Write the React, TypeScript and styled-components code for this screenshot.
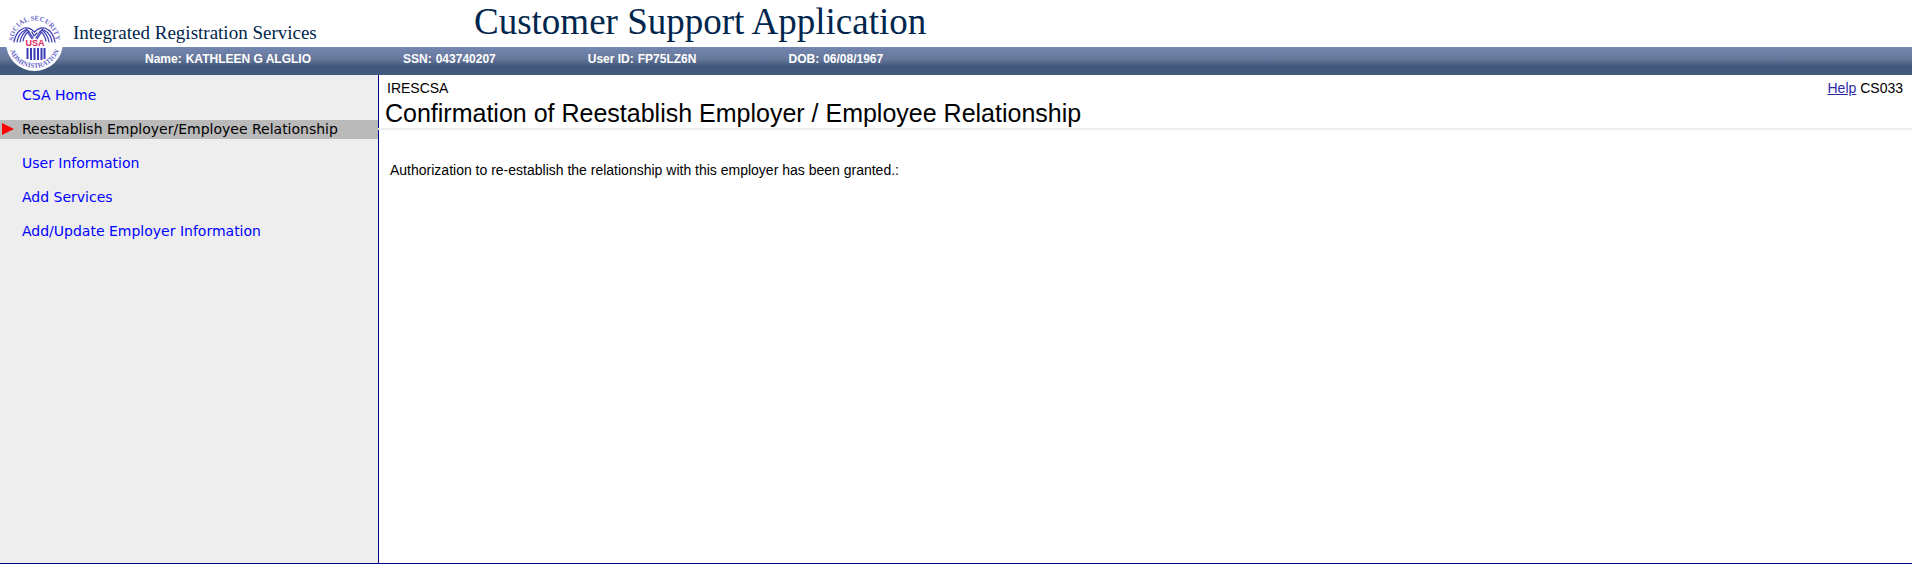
import React from "react";
import styled, { createGlobalStyle } from "styled-components";

const Global = createGlobalStyle`
  *, *::before, *::after { box-sizing: border-box; }
  body {
    margin: 0;
    background: #fff;
    color: #000;
    font-family: "Liberation Sans", Arial, sans-serif;
    font-size: 14px;
    line-height: 16px;
  }
  h1, h2, p, ul, dl, dt, dd { margin: 0; padding: 0; font-weight: inherit; }
  ul { list-style: none; }
`;

const Page = styled.div`
  display: flex;
  flex-direction: column;
  min-height: 100vh;
  padding-bottom: 23px;
`;

const Header = styled.header`
  position: relative;
`;

const Titles = styled.div`
  display: flex;
  align-items: flex-start;
  height: 47px;
  padding-left: 73px;
  color: #00264d;
  font-family: Georgia, "Liberation Serif", serif;
  white-space: nowrap;
`;

const ServiceName = styled.p`
  width: 401px;
  padding-top: 22px;
  font-size: 19px;
  line-height: 22px;
`;

const AppName = styled.p`
  padding-top: 2px;
  font-size: 37px;
  line-height: 40px;
`;

const Seal = styled.svg`
  position: absolute;
  left: 6px;
  top: 14px;
  width: 57px;
  height: 57px;
`;

const UserBar = styled.dl`
  display: flex;
  gap: 92px;
  height: 28px;
  padding: 4px 0 0 145px;
  background: linear-gradient(#7386b0 0%, #68799c 40%, #40597d 70%, #40597d 100%);
  color: #fff;
  font-size: 12px;
  font-weight: bold;
  white-space: nowrap;
`;

const UserFact = styled.div`
  display: flex;
  gap: 4px;
`;

const Columns = styled.div`
  display: flex;
  flex: 1;
  border-bottom: 1px solid #00008b;
`;

const Sidebar = styled.nav`
  flex: none;
  width: 378px;
  padding-top: 11px;
  background: #eee;
  font-family: Verdana, "DejaVu Sans", sans-serif;
  line-height: 19px;
`;

const NavList = styled.ul`
  display: flex;
  flex-direction: column;
  gap: 15px;
`;

const NavItem = styled.li<{ $current?: boolean }>`
  position: relative;
  padding-left: 22px;
  background: ${(p) => (p.$current ? "#bababa" : "transparent")};
`;

const NavLink = styled.a<{ $current?: boolean }>`
  color: ${(p) => (p.$current ? "#000" : "#00f")};
  text-decoration: none;
`;

const Marker = styled.svg`
  position: absolute;
  left: 2px;
  top: 3px;
  width: 12px;
  height: 12px;
`;

const Main = styled.main`
  display: flex;
  flex: 1;
  flex-direction: column;
  min-width: 0;
`;

const Heading = styled.header`
  padding: 5px 9px 1px 6px;
  border-left: 1px solid #00008b;
`;

const Meta = styled.div`
  display: flex;
  justify-content: space-between;
  padding-left: 2px;
`;

const Title = styled.h1`
  padding-top: 4px;
  font-size: 25px;
  line-height: 27px;
`;

const Rule = styled.div`
  height: 2px;
  background: #eee;
`;

const Content = styled.section`
  flex: 1;
  padding: 32px 11px;
  border-left: 1px solid #00008b;
`;

const HelpLink = styled.a`
  color: #2a2aa5;
`;

const facts = [
  ["Name:", "KATHLEEN G ALGLIO"],
  ["SSN:", "043740207"],
  ["User ID:", "FP75LZ6N"],
  ["DOB:", "06/08/1967"],
];

const links = [
  "CSA Home",
  "Reestablish Employer/Employee Relationship",
  "User Information",
  "Add Services",
  "Add/Update Employer Information",
];
const currentLink = 1;

function AgencySeal() {
  return (
    <Seal viewBox="0 0 57 57" role="img" aria-label="Social Security Administration">
      <circle cx="28.5" cy="28.5" r="28.5" fill="#fff" />
      <defs>
        <path id="sealTop" d="M8 32 A21 21 0 1 1 49 32" />
        <path id="sealBottom" d="M2.5 28 A26 26 0 0 0 54.5 28" />
      </defs>
      <g fill="#6b6bcc" fontFamily="Liberation Serif, serif" fontSize="7" fontWeight="bold">
        <text textAnchor="middle"><textPath href="#sealTop" startOffset="50%">SOCIAL SECURITY</textPath></text>
        <text textAnchor="middle"><textPath href="#sealBottom" startOffset="50%">ADMINISTRATION</textPath></text>
      </g>
      <g fill="none" stroke="#3b3bb5" strokeWidth="1.2" strokeLinecap="round">
        <path d="M8 28 Q10 17 18 14 Q24 13 28.5 18 Q33 13 39 14 Q47 17 49 28" />
        <path d="M11 28 Q12 20 19 16 M14 28 Q15 21 21 16 M17 27 Q18 21 23 17" />
        <path d="M46 28 Q45 20 38 16 M43 28 Q42 21 36 16 M40 27 Q39 21 34 17" />
        <path d="M20 15 Q24 18 27 24 M22 19 L26 25 M37 15 Q33 18 30 24 M35 19 L31 25" />
        <path d="M26 18 L28 22 L31 19" />
      </g>
      <path d="M21.5 34V45M25 34V46M28.5 34V46M32 34V46M35.5 34V46M38.5 34V45" stroke="#3b3bb5" strokeWidth="2" />
      <text x="29" y="32" textAnchor="middle" fill="#e0245c" stroke="#fff" strokeWidth="1.5" paintOrder="stroke" fontFamily="Liberation Sans, sans-serif" fontWeight="bold" fontSize="9">USA</text>
    </Seal>
  );
}

export default function App() {
  return (
    <Page>
      <Global />
      <Header>
        <Titles>
          <ServiceName>Integrated Registration Services</ServiceName>
          <AppName>Customer Support Application</AppName>
        </Titles>
        <UserBar>
          {facts.map(([label, value]) => (
            <UserFact key={label}>
              <dt>{label}</dt>
              <dd>{value}</dd>
            </UserFact>
          ))}
        </UserBar>
        <AgencySeal />
      </Header>
      <Columns>
        <Sidebar aria-label="Services">
          <NavList>
            {links.map((label, i) => (
              <NavItem key={label} $current={i === currentLink}>
                {i === currentLink && (
                  <Marker viewBox="0 0 12 12" aria-hidden="true">
                    <path d="M0 0L12 6L0 12Z" fill="#f00" />
                  </Marker>
                )}
                <NavLink href="#" $current={i === currentLink}>{label}</NavLink>
              </NavItem>
            ))}
          </NavList>
        </Sidebar>
        <Main>
          <Heading>
            <Meta>
              <span>IRESCSA</span>
              <span><HelpLink href="#">Help</HelpLink> CS033</span>
            </Meta>
            <Title>Confirmation of Reestablish Employer / Employee Relationship</Title>
          </Heading>
          <Rule />
          <Content>
            <p>Authorization to re-establish the relationship with this employer has been granted.:</p>
          </Content>
        </Main>
      </Columns>
    </Page>
  );
}
